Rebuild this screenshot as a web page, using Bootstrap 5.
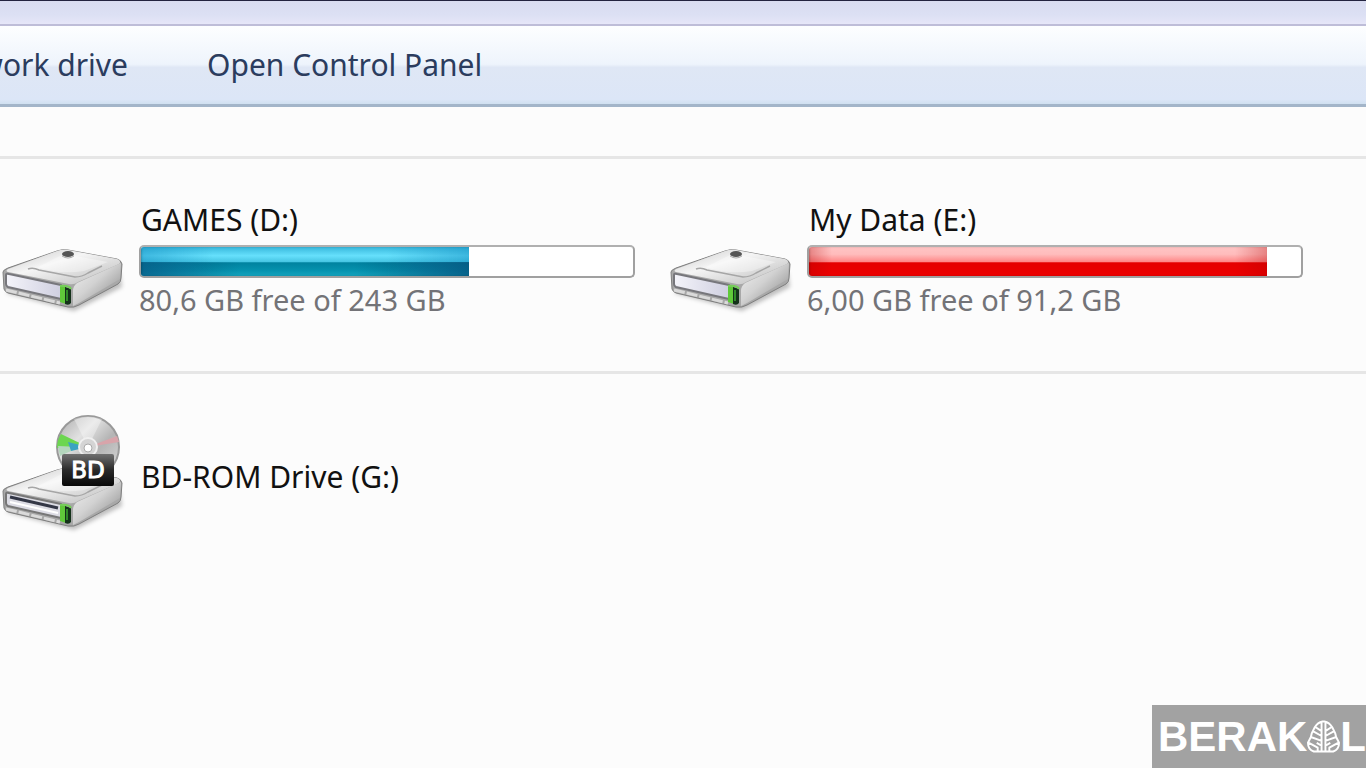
<!DOCTYPE html>
<html lang="en">
<head>
<meta charset="utf-8">
<meta name="viewport" content="width=device-width, initial-scale=1">
<title>Computer</title>
<link href="https://cdn.jsdelivr.net/npm/bootstrap@5.3.0/dist/css/bootstrap.min.css" rel="stylesheet">
<style>
  body { background: #fcfcfc; font-family: "Noto Sans", "Open Sans", sans-serif; font-size: 30px; line-height: 36px; color: #111; overflow-x: hidden; }
  .title-strip { height: 26px; background: linear-gradient(#d9dcf0, #dce0f4 60%, #e6e6f8); border-top: 1px solid #23233f; border-bottom: 2px solid #bebdd8; }
  .command-bar { height: 81px; background: linear-gradient(#fdfeff 0, #eef4fc 49%, #dfe7f5 53%, #dce6f7 94%, #d0e0f0 100%); border-bottom: 3px solid #a3b5c9; gap: 79px; }
  .command-bar a { color: #2b3c5e; white-space: nowrap; }
  .cut-command { width: 128px; }
  .drive-list { padding-top: 49px; }
  .drive-group { border-top: 3px solid #e6e6e6; padding-right: 30px; }
  .disks { height: 215px; padding-top: 43px; }
  .optical { padding-top: 40px; }
  .drive-icon { width: 127px; flex: none; }
  .drive-text { margin-left: 12px; padding-right: 33px; min-width: 0; }
  .drive-name { padding-left: 2px; margin-bottom: 7px; }
  .drive-label { margin-left: 14px; padding-top: 5px; }
  .free-space { color: #737377; font-size: 29px; line-height: 34px; padding-top: 5px; }
  .capacity { height: 33px; border: 2px solid #a0a0a0; border-top-color: #b0b0b0; border-radius: 5px; background: #fff; }
  .capacity .progress-bar { box-shadow: inset 1px 0 2px #00000033; }
  .fill-blue { background: linear-gradient(90deg, #003c6480 0, #003c6400 30%, #003c6400 65%, #003c6490 100%) bottom / 100% 14px no-repeat, linear-gradient(90deg, #1590c480 0, #1590c400 22%, #1590c400 75%, #1590c480 100%), linear-gradient(#38b8dc 0, #66e0fc 30%, #45c4e2 52%, #00829f 54%, #0592ae 80%, #14a4be 100%); }
  .fill-red { background: linear-gradient(90deg, #b0000050 0, #b0000000 5%, #b0000000 93%, #b0000050 100%), linear-gradient(#ffc4c4 0, #ffbcbc 25%, #ff8686 52%, #e50000 54%, #ec0000 100%); }
  .site-brand { background: #a2a2a2; color: #fff; width: 214px; height: 63px; font: bold 42px/66px "Liberation Sans", Arial, sans-serif; padding-left: 6px; }
</style>
</head>
<body>
<svg width="0" height="0" class="d-block" aria-hidden="true">
  <defs>
    <linearGradient id="lid" x1="0" y1="0" x2="1" y2="1"><stop offset="0" stop-color="#c6c6c6"/><stop offset=".4" stop-color="#f5f5f5"/><stop offset=".75" stop-color="#d2d2d2"/><stop offset="1" stop-color="#bababa"/></linearGradient>
    <linearGradient id="side" x1="0" y1="0" x2="1" y2="1"><stop offset="0" stop-color="#f2f2f2"/><stop offset=".45" stop-color="#d2d2d2"/><stop offset="1" stop-color="#808080"/></linearGradient>
    <linearGradient id="face" x1="0" y1="0" x2="1" y2="0"><stop offset="0" stop-color="#f4f4fa"/><stop offset="1" stop-color="#cfcfe0"/></linearGradient>
    <linearGradient id="disc" x1="0" y1="0" x2="1" y2="1"><stop offset="0" stop-color="#a8a8a8"/><stop offset=".35" stop-color="#e2e2e2"/><stop offset=".6" stop-color="#b4b4b4"/><stop offset="1" stop-color="#dedede"/></linearGradient>
    <linearGradient id="plate" x1="0" y1="0" x2="0" y2="1"><stop offset="0" stop-color="#707070"/><stop offset=".5" stop-color="#2a2a2a"/><stop offset="1" stop-color="#080808"/></linearGradient>
    <filter id="shade" x="-20%" y="-50%" width="140%" height="200%"><feGaussianBlur stdDeviation="2"/></filter>
    <g id="case">
      <path d="M6 54L74 72L122 48L120 34L20 42Z" fill="#00000040" filter="url(#shade)"/>
      <path d="M3 33L4 50Q5 53 8 54L68 68Q74 69 79 66L118 45Q121 43 121 39L122 25Q121 21 117 20L68 11Q62 10 57 12L8 29Q3 31 3 33Z" fill="#a8a8a8" stroke="#7f7f7f"/>
      <path d="M8 30L57 12Q62 10 68 11L117 20Q122 22 119 25L78 43Q74 46 69 45L8 33Q5 32 8 30Z" fill="url(#lid)"/>
      <path d="M77 44L121 24L120 40L79 64L73 67V52Q73 47 77 44Z" fill="url(#side)"/>
      <path d="M28 30Q33 28 39 31L75 38Q82 38 88 34L102 27" stroke="#a6a6a6" stroke-width="1.5" fill="none"/>
      <path d="M38 28L64 15L108 23L84 32Q60 36 38 28Z" fill="#fff" fill-opacity=".35"/>
      <path d="M6 51L60 64" stroke="#dadada" stroke-width="3" stroke-dasharray="11 2"/>
    </g>
    <g id="lamp">
      <path d="M60 47L66 48V65L60 63Z" fill="#60c93a"/><path d="M65 48L71 50V64Q69 67 65 65Z" fill="#14321a"/>
      <path d="M60 47Q69 46 71 50" fill="none" stroke="#74ce58" stroke-width="2"/><path d="M67 51V62" stroke="#2f8a28" stroke-width="2"/>
    </g>
  </defs>
</svg>

<header>
  <div class="title-strip"></div>
  <nav class="command-bar d-flex align-items-center" aria-label="Commands">
    <div class="cut-command d-flex justify-content-end"><a href="#" class="text-decoration-none">work drive</a></div>
    <a href="#" class="text-decoration-none">Open Control Panel</a>
  </nav>
</header>

<main class="drive-list">
  <section class="drive-group disks">
    <div class="row g-0">
      <div class="col-6 d-flex">
        <svg class="drive-icon align-self-end" viewBox="0 0 127 78" aria-hidden="true"><use href="#case"/><path d="M6 36Q6 34 9 35L61 46V60L8 48Q6 47 6 45Z" fill="url(#face)" stroke="#77777c" stroke-width="2" stroke-linejoin="round"/><ellipse cx="68" cy="15" rx="6" ry="3" fill="#555"/><path d="M62 17Q68 21 74 17" stroke="#aaa" fill="none"/><use href="#lamp"/></svg>
        <div class="drive-text flex-grow-1">
          <div class="drive-name">GAMES (D:)</div>
          <div class="capacity progress" role="progressbar" aria-label="GAMES used space" aria-valuenow="67" aria-valuemin="0" aria-valuemax="100"><div class="progress-bar fill-blue" style="width:66.7%"></div></div>
          <div class="free-space">80,6 GB free of 243 GB</div>
        </div>
      </div>
      <div class="col-6 d-flex">
        <svg class="drive-icon align-self-end" viewBox="0 0 127 78" aria-hidden="true"><use href="#case"/><path d="M6 36Q6 34 9 35L61 46V60L8 48Q6 47 6 45Z" fill="url(#face)" stroke="#77777c" stroke-width="2" stroke-linejoin="round"/><ellipse cx="68" cy="15" rx="6" ry="3" fill="#555"/><path d="M62 17Q68 21 74 17" stroke="#aaa" fill="none"/><use href="#lamp"/></svg>
        <div class="drive-text flex-grow-1">
          <div class="drive-name">My Data (E:)</div>
          <div class="capacity progress" role="progressbar" aria-label="My Data used space" aria-valuenow="93" aria-valuemin="0" aria-valuemax="100"><div class="progress-bar fill-red" style="width:93.1%"></div></div>
          <div class="free-space">6,00 GB free of 91,2 GB</div>
        </div>
      </div>
    </div>
  </section>
  <section class="drive-group optical">
    <div class="d-flex align-items-center">
      <svg class="drive-icon" viewBox="0 0 127 120" aria-hidden="true">
        <use href="#case" y="44"/>
        <path d="M6 80Q6 78 9 79L61 90V104L8 92Q6 91 6 89Z" fill="#dcdce4" stroke="#777" stroke-width="2" stroke-linejoin="round"/><path d="M10 83L58 94" stroke="#333746" stroke-width="3"/><path d="M10 88L58 99" stroke="#fff" stroke-width="2"/>
        <use href="#lamp" y="44"/>
        <circle cx="88" cy="33" r="31" fill="url(#disc)" stroke="#999" stroke-width="2"/>
        <path d="M88 33L61 20Q57 26 57 34L70 33Z" fill="#6cd650"/><path d="M80 33L58 32L60 42Z" fill="#b4d6bd"/><path d="M88 33L68 28L71 37Z" fill="#3ba3c2"/><path d="M88 33L117 22L119 28Z" fill="#d8a4aa"/>
        <path d="M88 33L74 5Q88 0 102 5Z" fill="#fff" fill-opacity=".35"/>
        <circle cx="88" cy="33" r="9" fill="#d4d4d4" stroke="#f0f0f0" stroke-width="2"/><circle cx="88" cy="34" r="4" fill="#fff" stroke="#aaa"/>
        <rect x="62" y="40" width="52" height="32" rx="2" fill="url(#plate)"/>
        <text x="88" y="64" text-anchor="middle" font-family="DejaVu Sans" font-size="23" fill="#fff" stroke="#fff">BD</text>
      </svg>
      <div class="drive-label">BD-ROM Drive (G:)</div>
    </div>
  </section>
</main>

<footer class="site-brand position-fixed bottom-0 end-0 d-flex align-items-center overflow-hidden">
  <span>BERAK</span>
  <svg width="34" height="33" viewBox="0 0 34 33" fill="none" stroke="#fff" stroke-width="2" stroke-linejoin="round" aria-hidden="true">
    <path d="M16 1Q11 2 8 7L5 13L4 17L1 23Q1 30 7 32H27Q33 30 33 23L30 17L29 13L26 7Q23 2 18 1ZM15 2V32M19 2V32M15 11L9 7M15 16L6 11M15 21L4 17M15 26L10 23M11 32V28L2 23M19 11L25 7M19 16L28 11M19 21L30 17M19 26L24 23M23 32V28L32 23"/>
  </svg>
  <span>L</span>
</footer>
<script src="https://cdn.jsdelivr.net/npm/bootstrap@5.3.0/dist/js/bootstrap.bundle.min.js"></script>
</body>
</html>
